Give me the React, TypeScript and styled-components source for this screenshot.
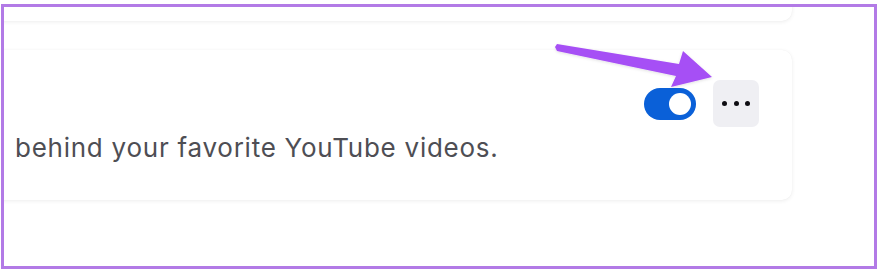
import React from "react";
import styled, { createGlobalStyle } from "styled-components";

const Global = createGlobalStyle`
  html, body { margin: 0; padding: 0; background: #ffffff; }
  body { font-family: Inter, "Liberation Sans", Arial, sans-serif; }
`;

const Frame = styled.div`
  position: relative;
  box-sizing: border-box;
  margin: 4px 0 0 1px;
  width: 876px;
  height: 265px;
  border: 3px solid #b27ae6;
  overflow: hidden;
  background: #ffffff;
`;

const Stack = styled.div`
  display: flex;
  flex-direction: column;
  gap: 29px;
  margin-top: -26px;
  margin-left: -22px;
  width: 810px;
`;

const Card = styled.div<{ $height?: number }>`
  box-sizing: border-box;
  background: #ffffff;
  border-radius: 10px;
  box-shadow: 0 1px 4px rgba(0, 0, 0, 0.07), 0 0 1px rgba(0, 0, 0, 0.06);
  ${(p) => (p.$height ? `height: ${p.$height}px;` : "")}
`;

const SettingCard = styled(Card)`
  display: flex;
  flex-direction: column;
  padding: 30px 33px 37px 33px;
  height: 150px;
`;

const Header = styled.div`
  display: flex;
  justify-content: flex-end;
  align-items: center;
  gap: 17px;
  height: 47px;
`;

const Toggle = styled.div<{ $on: boolean }>`
  position: relative;
  width: 52px;
  height: 32px;
  border-radius: 16px;
  background: ${(p) => (p.$on ? "#0a60d8" : "#c8c8cc")};
`;

const Knob = styled.div<{ $on: boolean }>`
  position: absolute;
  top: 5px;
  ${(p) => (p.$on ? "right: 5px;" : "left: 5px;")}
  width: 22px;
  height: 22px;
  border-radius: 50%;
  background: #ffffff;
`;

const MoreButton = styled.button`
  display: flex;
  align-items: center;
  justify-content: center;
  gap: 6.5px;
  width: 46px;
  height: 47px;
  padding: 0;
  border: none;
  border-radius: 7px;
  background: #efeff3;
`;

const Dot = styled.span`
  width: 5px;
  height: 5px;
  border-radius: 50%;
  background: #0e0d12;
`;

const Description = styled.p`
  margin: 6px 0 0 0;
  font-family: Inter, "Liberation Sans", Arial, sans-serif;
  font-size: 26px;
  letter-spacing: 0.75px;
  line-height: 30px;
  color: #4e4e54;
  white-space: nowrap;
`;

const Overlay = styled.svg`
  position: absolute;
  left: -4px;
  top: -7px;
  pointer-events: none;
`;

export default function App() {
  return (
    <>
      <Global />
      <Frame>
        <Stack>
          <Card $height={40} />
          <SettingCard>
            <Header>
              <Toggle $on>
                <Knob $on />
              </Toggle>
              <MoreButton aria-label="More options">
                <Dot />
                <Dot />
                <Dot />
              </MoreButton>
            </Header>
            <Description>behind your favorite YouTube videos.</Description>
          </SettingCard>
        </Stack>
        <Overlay width={878} height={270} viewBox="0 0 878 270">
          <defs>
            <filter id="sh" x="-10%" y="-50%" width="120%" height="200%">
              <feDropShadow dx="0" dy="1" stdDeviation="1.5" floodColor="#000" floodOpacity="0.12" />
            </filter>
          </defs>
          <polygon
            filter="url(#sh)"
            fill="#a64ff5"
            points="557,44 679,64 683,51 712,77 671,87 676,76 557,51 555,47"
          />
        </Overlay>
      </Frame>
    </>
  );
}
